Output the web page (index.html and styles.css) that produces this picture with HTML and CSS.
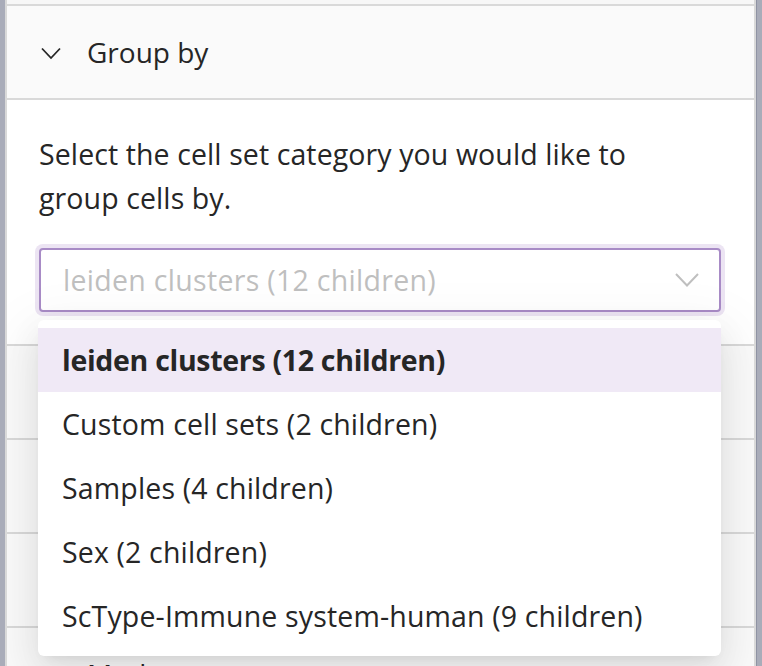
FILE: index.html
```html
<!DOCTYPE html>
<html lang="en">
<head>
<meta charset="utf-8">
<title>Group by</title>
<link rel="stylesheet" href="styles.css">
</head>
<body>
<div class="frame">
  <div class="bar-left"></div>
  <div class="panel">
    <div class="top-strip"></div>
    <div class="collapse">
      <div class="item">
        <div class="header">
          <svg class="chev" width="20" height="13" viewBox="0 0 20 13"><path d="M1 1.5 L10 11 L19 1.5" fill="none" stroke="#262626" stroke-width="1.8"/></svg>
          <span class="title">Group by</span>
        </div>
        <div class="content">
          <p class="desc">Select the cell set category you would like to group cells by.</p>
          <div class="select-wrap">
            <div class="select">
              <span class="placeholder">leiden clusters (12 children)</span>
              <svg class="arrow" width="24" height="14" viewBox="0 0 24 14"><path d="M1 1 L12 12.5 L23 1" fill="none" stroke="#bfbfbf" stroke-width="2"/></svg>
            </div>
            <div class="dropdown">
              <div class="option selected">leiden clusters (12 children)</div>
              <div class="option">Custom cell sets (2 children)</div>
              <div class="option">Samples (4 children)</div>
              <div class="option">Sex (2 children)</div>
              <div class="option">ScType-Immune system-human (9 children)</div>
            </div>
          </div>
        </div>
      </div>
      <div class="item"><div class="header"></div></div>
      <div class="item"><div class="header"></div></div>
      <div class="item"><div class="header"></div></div>
      <div class="item">
        <div class="header"><svg class="chev" width="20" height="13" viewBox="0 0 20 13"><path d="M1 1.5 L10 11 L19 1.5" fill="none" stroke="#262626" stroke-width="1.8"/></svg><span class="title">Markers</span></div>
      </div>
    </div>
  </div>
  <div class="bar-right"></div>
</div>
</body>
</html>
```

FILE: styles.css
```css
html, body {
  margin: 0;
  padding: 0;
  height: 100%;
  overflow: hidden;
  background: #ffffff;
}
body {
  font-family: "Open Sans", "Noto Sans", sans-serif;
  color: #262626;
}
.frame {
  display: flex;
  height: 666px;
}
.bar-left {
  width: 5px;
  background: #a9acb9;
  flex: none;
}
.bar-right {
  width: 6px;
  background: #a9acb9;
  border-left: 1px solid #8f93a3;
  box-sizing: border-box;
  flex: none;
}
.panel {
  flex: 1;
  border-left: 2px solid #d9d9d9;
  border-right: 2px solid #d9d9d9;
  background: #ffffff;
  overflow: hidden;
}
.top-strip {
  height: 4px;
  background: #f7f7f7;
}
.collapse {
  border-top: 2px solid #d9d9d9;
}
.item {
  border-bottom: 2px solid #d9d9d9;
}
.header {
  display: flex;
  align-items: center;
  height: 92px;
  box-sizing: border-box;
  padding: 0 32px 0 34px;
  background: #fafafa;
  font-size: 28px;
  line-height: 44px;
}
.chev {
  flex: none;
  margin-right: 26px;
  margin-top: 2px;
}
.title {
  color: #262626;
}
.content {
  padding: 32px 33px 32px 32px;
  background: #ffffff;
  border-top: 2px solid #d9d9d9;
}
.desc {
  margin: 0;
  max-width: 640px;
  font-size: 28.5px;
  line-height: 44px;
  color: #262626;
  letter-spacing: 0.1px;
}
.select-wrap {
  position: relative;
  margin-top: 28px;
}
.select {
  display: flex;
  align-items: center;
  justify-content: space-between;
  height: 64px;
  box-sizing: border-box;
  border: 2px solid #a88bc6;
  border-radius: 4px;
  box-shadow: 0 0 0 4px #ece4f3;
  padding: 0 20px 0 22px;
  background: #ffffff;
}
.placeholder {
  font-size: 28.5px;
  color: #bfbfbf;
  letter-spacing: 0.3px;
}
.arrow {
  flex: none;
}
.dropdown {
  position: absolute;
  left: -1px;
  right: 0;
  top: 72px;
  background: #ffffff;
  border-radius: 6px;
  padding: 8px 0;
  box-shadow: 0 6px 12px -8px rgba(0,0,0,0.12), 0 12px 32px 0 rgba(0,0,0,0.08), 0 18px 56px 16px rgba(0,0,0,0.05);
  z-index: 10;
}
.option {
  height: 64px;
  padding: 0 24px;
  font-size: 28.5px;
  line-height: 64px;
  color: #262626;
  white-space: nowrap;
  letter-spacing: 0.15px;
}
.option.selected {
  background: #f0e9f6;
  font-weight: 700;
  letter-spacing: -0.3px;
}
```
